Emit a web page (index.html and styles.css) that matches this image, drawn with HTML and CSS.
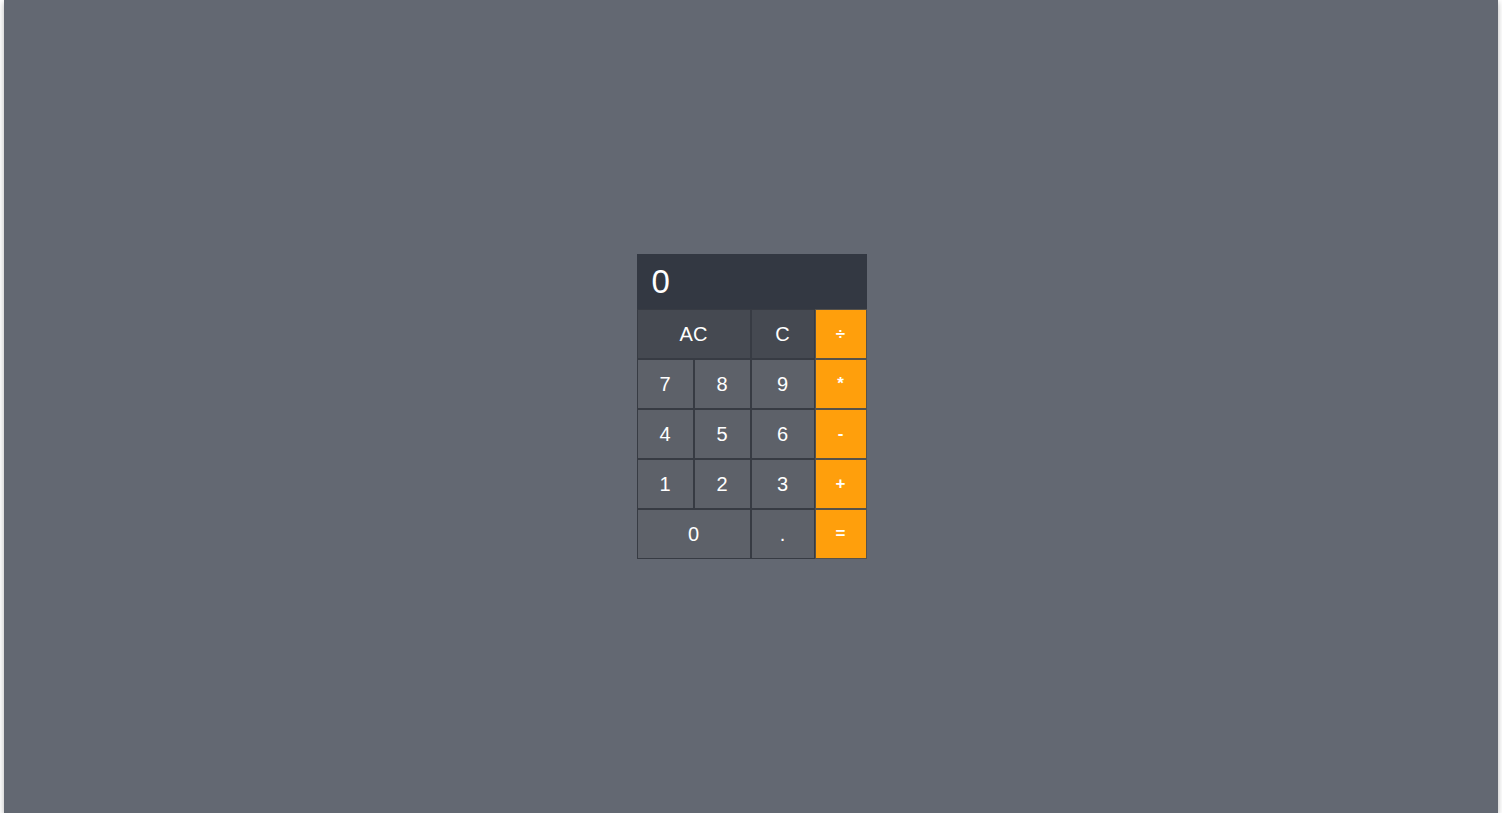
FILE: index.html
```html
<!DOCTYPE html>
<html>
<head>
<meta charset="utf-8">
<link rel="stylesheet" href="styles.css">
</head>
<body>
<div class="screen">
  <div class="calc">
    <div class="display">0</div>
    <div class="keys">
      <div class="key fn wide">AC</div>
      <div class="key fn">C</div>
      <div class="key op">÷</div>
      <div class="key">7</div>
      <div class="key">8</div>
      <div class="key">9</div>
      <div class="key op">*</div>
      <div class="key">4</div>
      <div class="key">5</div>
      <div class="key">6</div>
      <div class="key op">-</div>
      <div class="key">1</div>
      <div class="key">2</div>
      <div class="key">3</div>
      <div class="key op">+</div>
      <div class="key wide">0</div>
      <div class="key">.</div>
      <div class="key op">=</div>
    </div>
  </div>
</div>
</body>
</html>
```
FILE: styles.css
```css
html, body {
  margin: 0;
  padding: 0;
  background: #ffffff;
  font-family: "Liberation Sans", Arial, sans-serif;
}
.screen {
  margin: 0 4px;
  height: 813px;
  background: #636872;
  box-shadow: 0 2px 6px rgba(0, 0, 0, 0.28);
  display: flex;
  align-items: center;
  justify-content: center;
}
.calc {
  width: 230px;
  margin-left: 1px;
}
.display {
  height: 55px;
  box-sizing: border-box;
  background: #333842;
  color: #ffffff;
  font-size: 33px;
  padding-left: 15px;
  display: flex;
  align-items: center;
  padding-top: 1px;
}
.keys {
  display: grid;
  grid-template-columns: 57px 57px 64px 52px;
  grid-auto-rows: 50px;
}
.key {
  box-sizing: border-box;
  border: 1px solid #373b43;
  background: #5d6169;
  color: #ffffff;
  font-size: 20px;
  display: flex;
  align-items: center;
  justify-content: center;
}
.wide {
  grid-column: span 2;
}
.fn {
  background: #454951;
}
.op {
  background: #ff9f0c;
  border-color: #57524a;
  font-size: 17px;
  font-weight: bold;
}
```
